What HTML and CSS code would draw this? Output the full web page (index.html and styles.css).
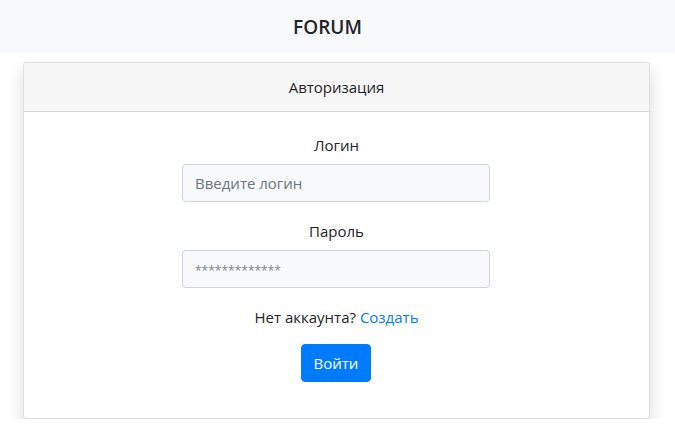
FILE: index.html
```html
<!DOCTYPE html>
<html lang="ru">
<head>
<meta charset="utf-8">
<link rel="stylesheet" href="styles.css">
</head>
<body>
<header class="topbar"><span class="brand">FORUM</span></header>
<main class="card">
  <div class="card-header">Авторизация</div>
  <form class="card-body">
    <label class="label" for="login">Логин</label>
    <input class="field" id="login" type="text" placeholder="Введите логин">
    <label class="label label-gap" for="pass">Пароль</label>
    <input class="field field-pass" id="pass" type="text" placeholder="*************">
    <p class="note">Нет аккаунта? <a href="#" class="link">Создать</a></p>
    <button type="button" class="btn">Войти</button>
  </form>
</main>
</body>
</html>
```
FILE: styles.css
```css
* { box-sizing: border-box; }
body {
  margin: 0;
  font-family: "Open Sans", "Noto Sans", sans-serif;
  font-size: 15px;
  color: #212529;
  background: #fff;
}
.topbar {
  height: 53px;
  background: #f8f9fa;
  display: flex;
  align-items: center;
  justify-content: center;
}
.brand {
  font-size: 19px;
  font-weight: 600;
  color: #212529;
  margin-right: 20px;
}
.card {
  width: 627px;
  margin: 9px 0 0 23px;
  border: 1px solid rgba(0,0,0,.125);
  border-radius: 4px;
  box-shadow: 0 8px 16px rgba(0,0,0,.15);
  background: #fff;
}
.card-header {
  height: 49px;
  display: flex;
  align-items: center;
  justify-content: center;
  background: #f7f7f7;
  border-bottom: 1px solid rgba(0,0,0,.125);
  border-radius: 3px 3px 0 0;
}
.card-body {
  margin: 0;
  padding: 21px 0 36px;
  display: flex;
  flex-direction: column;
  align-items: center;
}
.label {
  line-height: 24px;
  margin-bottom: 7px;
}
.label-gap { margin-top: 17px; }
.field {
  width: 308px;
  height: 38px;
  padding: 6px 12px;
  font: inherit;
  color: #495057;
  background: #f8f9fa;
  border: 1px solid #ced4da;
  border-radius: 4px;
  margin-left: -1px;
}
.field::placeholder { color: #6c757d; }
.field-pass::placeholder { font-size: 12px; color: #7d858c; }
.note {
  margin: 17px 0 15px;
  line-height: 24px;
}
.link { color: #007bff; text-decoration: none; }
.btn {
  width: 70px;
  height: 38px;
  background: #007bff;
  color: #fff;
  border: 1px solid #007bff;
  border-radius: 4px;
  font: inherit;
  padding: 0;
  margin-left: -1px;
}
```
